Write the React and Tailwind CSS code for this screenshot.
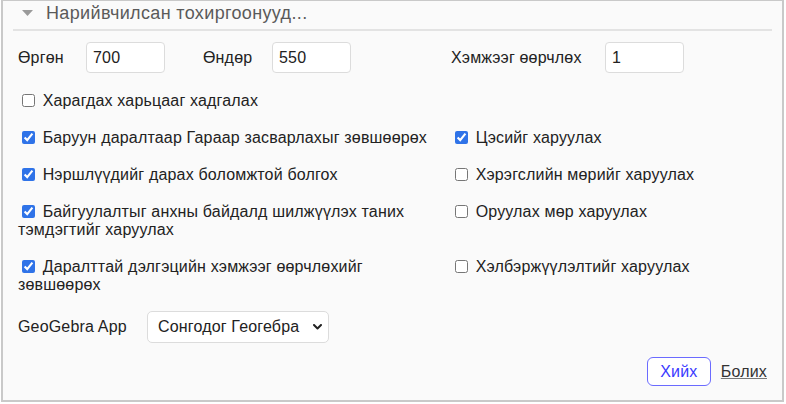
import React from "react";

function Check({ checked, children }) {
  return (
    <label className="block leading-[18px]">
      <input
        type="checkbox"
        defaultChecked={checked}
        className="w-[13px] h-[13px] ml-[4px] mr-[3px] my-0 align-[-1px] accent-[#2f73e8]"
      />{" "}
      {children}
    </label>
  );
}

export default function App() {
  return (
    <div className="w-[786px] h-[404px] bg-white pl-[1px] overflow-hidden" style={{ fontFamily: '"Liberation Sans", Arial, sans-serif' }}>
      <div className="w-[783px] h-[402px] border-t border-x-2 border-b-2 border-[#c9c9c9] bg-[#fafafa] text-[16px] tracking-[0.17px] text-[#222]">
        <div className="mx-[10px] h-[30px] border-b-2 border-[#e3e3e3] flex items-center">
          <svg width="11" height="6" viewBox="0 0 11 6" className="ml-[9px] mt-[-4px]">
            <path d="M0 0 L11 0 L5.5 6 Z" fill="#9a9a9a" />
          </svg>
          <span className="ml-[13px] mt-[-3px] text-[18px] tracking-[0.35px] text-[#5a5a5a]">Нарийвчилсан тохиргоонууд...</span>
        </div>
        <div className="px-[15px]">
          <div className="flex items-center mt-[11px] h-[31px]">
            <span className="w-[68px]">Өргөн</span>
            <input defaultValue="700" className="w-[79px] h-[31px] bg-white border border-[#dcdcdc] rounded-[4px] px-[6px] outline-none" />
            <span className="ml-[38px] w-[69px]">Өндөр</span>
            <input defaultValue="550" className="w-[79px] h-[31px] bg-white border border-[#dcdcdc] rounded-[4px] px-[6px] outline-none" />
            <span className="ml-[100px] w-[154px]">Хэмжээг өөрчлөх</span>
            <input defaultValue="1" className="w-[79px] h-[31px] bg-white border border-[#dcdcdc] rounded-[4px] px-[6px] outline-none" />
          </div>
          <div className="mt-[19px]">
            <Check>Харагдах харьцааг хадгалах</Check>
          </div>
          <div className="grid grid-cols-[433px_1fr] gap-x-0 gap-y-[19px] mt-[19px]">
            <Check checked>Баруун даралтаар Гараар засварлахыг зөвшөөрөх</Check>
            <Check checked>Цэсийг харуулах</Check>
            <Check checked>Нэршлүүдийг дарах боломжтой болгох</Check>
            <Check>Хэрэгслийн мөрийг харуулах</Check>
            <div className="pr-[20px]">
              <Check checked>Байгуулалтыг анхны байдалд шилжүүлэх таних тэмдэгтийг харуулах</Check>
            </div>
            <Check>Оруулах мөр харуулах</Check>
            <div className="pr-[20px]">
              <Check checked>Даралттай дэлгэцийн хэмжээг өөрчлөхийг зөвшөөрөх</Check>
            </div>
            <Check>Хэлбэржүүлэлтийг харуулах</Check>
          </div>
          <div className="flex items-center mt-[17px]">
            <span className="w-[129px]">GeoGebra App</span>
            <div className="relative">
              <select className="appearance-none w-[182px] h-[32px] bg-white border border-[#dcdcdc] rounded-[5px] pl-[10px] pr-[24px] outline-none text-[16px] tracking-[0.17px] text-[#222]">
                <option>Сонгодог Геогебра</option>
              </select>
              <svg width="9" height="6" viewBox="0 0 9 6" className="absolute right-[7px] top-[13px] pointer-events-none">
                <path d="M1 1 L4.5 4.5 L8 1" stroke="#222" strokeWidth="2" fill="none" strokeLinecap="round" strokeLinejoin="round" />
              </svg>
            </div>
          </div>
          <div className="flex justify-end items-center mt-[14px] mr-[0px]">
            <button className="w-[64px] h-[29px] border border-[#6b6bff] rounded-[6px] text-[#3a3aff] bg-white text-[16px]">Хийх</button>
            <span className="ml-[10px] underline decoration-[#777] text-[#333]">Болих</span>
          </div>
        </div>
      </div>
    </div>
  );
}
